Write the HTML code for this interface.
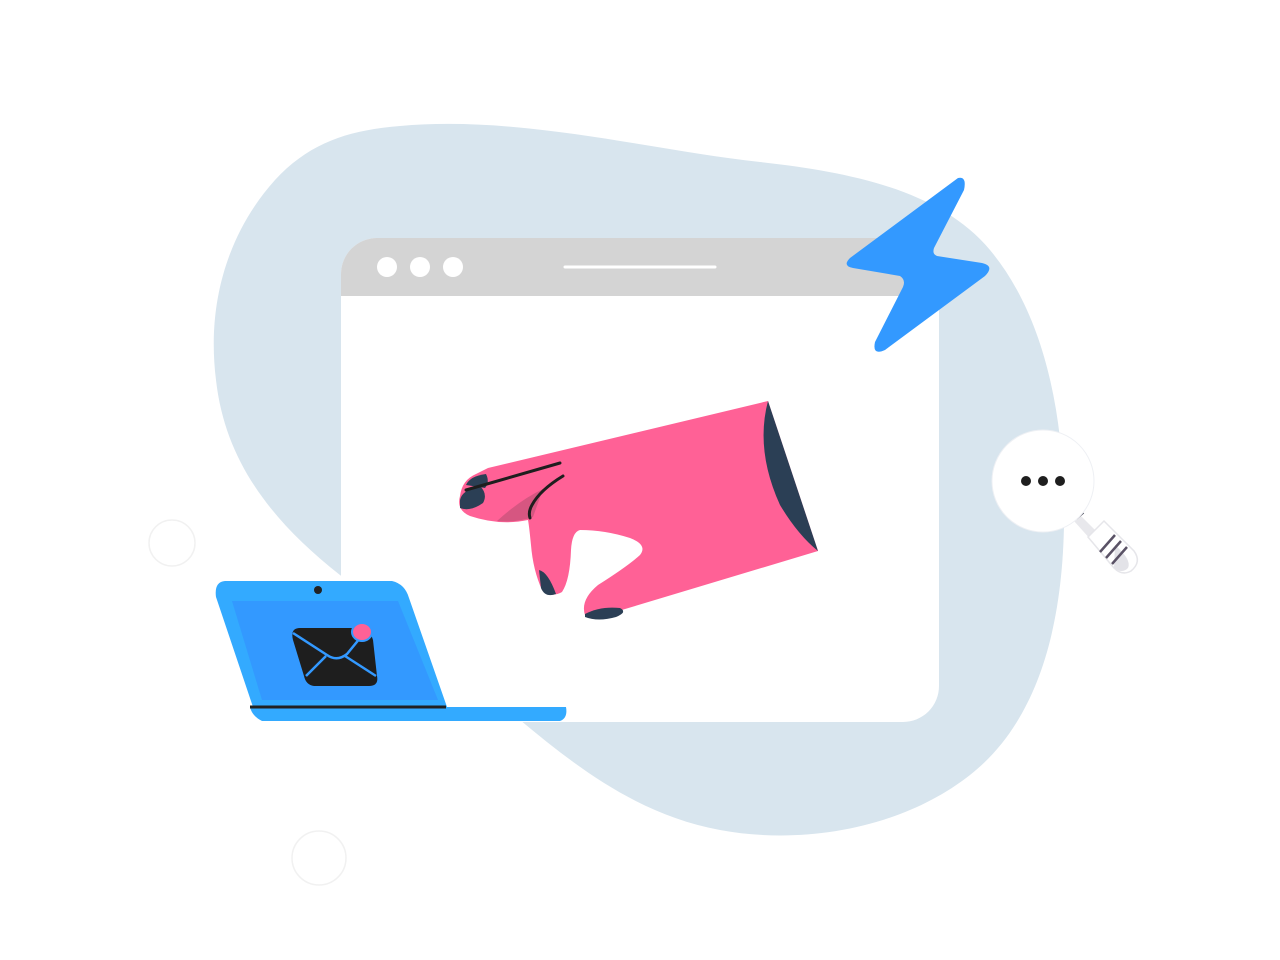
<!DOCTYPE html>
<html><head><style>html,body{margin:0;padding:0;background:#fff;width:1280px;height:960px;overflow:hidden}</style></head>
<body>
<svg width="1280" height="960" viewBox="0 0 1280 960" xmlns="http://www.w3.org/2000/svg">
<path d="M400,126 C520,115 650,150 760,162 C850,172 940,190 990,250 C1040,310 1062,400 1064,500 C1066,620 1040,720 970,775 C900,830 800,845 720,830 C640,815 580,770 520,720 L340,575 C270,520 225,460 216,380 C206,300 230,230 275,180 C310,142 350,130 400,126 Z" fill="#d8e5ee"/>
<circle cx="172" cy="543" r="23" fill="#fff" stroke="#f1f1f1" stroke-width="1.5"/>
<circle cx="319" cy="858" r="27" fill="#fff" stroke="#f1f1f1" stroke-width="1.5"/>
<rect x="341" y="238" width="598" height="484" rx="36" fill="#fff"/>
<path d="M377,238 H903 A36,36 0 0 1 939,274 V296 H341 V274 A36,36 0 0 1 377,238 Z" fill="#d4d4d4"/>
<circle cx="387" cy="267" r="10" fill="#fff"/><circle cx="420" cy="267" r="10" fill="#fff"/><circle cx="453" cy="267" r="10" fill="#fff"/>
<line x1="565" y1="267" x2="715" y2="267" stroke="#fff" stroke-width="3" stroke-linecap="round"/>
<path d="M958,178 L850,258 Q842,266 853,268 L900,276 Q906,280 903,287 L875,342 Q872,356 885,350 L985,276 Q995,266 982,263 L937,256 Q932,254 934,248 L964,190 Q967,176 958,178 Z" fill="#3399ff"/>
<path d="M488,468 L768,401 L818,551 L615,612 Q595,620 585,615 Q580,600 598,585 Q628,566 640,555 Q648,545 630,538 Q605,530 580,530 Q572,532 571,550 Q570,580 562,592 Q552,598 542,590 Q533,570 531,545 Q529,525 528,520 Q500,526 470,516 Q456,510 460,496 Q462,480 476,474 Z" fill="#ff6196"/>
<path d="M768,401 Q755,450 780,505 Q798,535 818,551 Z" fill="#2b3f55"/>
<path d="M460,500 Q462,490 480,486 Q488,494 483,503 Q470,512 460,508 Z" fill="#2b3f55"/>
<path d="M466,485 Q470,476 486,474 Q490,482 485,488 Z" fill="#2b3f55"/>
<path d="M539,570 Q548,572 556,594 Q545,598 541,588 Z" fill="#2b3f55"/>
<path d="M585,614 Q600,606 620,608 Q628,612 616,617 Q598,622 585,617 Z" fill="#2b3f55"/>
<path d="M497,521 Q520,500 543,489 L533,517 Q515,523 497,521 Z" fill="#d65681"/>
<path d="M466,490 L560,463" stroke="#1e1e1e" stroke-width="3" stroke-linecap="round"/>
<path d="M563,476 Q540,490 532,505 Q528,512 530,518" stroke="#1e1e1e" stroke-width="3" fill="none" stroke-linecap="round"/>
<path d="M225,581 L392,581 Q405,584 409,598 L447,707 L253,707 L216,597 Q214,582 225,581 Z" fill="#33aaff"/>
<path d="M232,601 L398,601 L438,700 L262,700 Z" fill="#3399ff"/>
<circle cx="318" cy="590" r="4" fill="#222"/>
<path d="M250,707 L566,707 Q568,718 560,721 L262,721 Q252,716 250,707 Z" fill="#33aaff"/>
<line x1="250" y1="707" x2="446" y2="707" stroke="#222" stroke-width="3"/>
<path d="M300,628 L362,628 Q370,630 373,640 L377,676 Q379,686 369,686 L314,686 Q306,685 304,676 L293,640 Q290,628 300,628 Z" fill="#1e1e1e"/>
<path d="M293,633 L327,655 Q337,662 347,654 L365,632 M306,676 L326,656 M345,656 L376,676" stroke="#3399ff" stroke-width="2.5" fill="none"/>
<ellipse cx="362" cy="632" rx="10" ry="9" fill="#ff6196" stroke="#3399ff" stroke-width="2"/>
<path d="M1079,514 L1099,534 L1092,541 L1074,521 Z" fill="#e8e8ec"/>
<path d="M1088,537 L1104,521 L1134,551 Q1142,562 1131,571 Q1122,576 1114,568 Z" fill="#fff" stroke="#e6e6ea" stroke-width="1.5"/>
<path d="M1115,545 Q1132,560 1128,568 Q1122,574 1114,568 Z" fill="#e3e3e8"/>
<path d="M1076,518 L1083,512" stroke="#4a4a5a" stroke-width="3.5"/>
<path d="M1115,535 L1100,552 M1121,541 L1106,558 M1127,547 L1112,564" stroke="#5a5266" stroke-width="2.5"/>
<circle cx="1043" cy="481" r="51" fill="#fff" stroke="#eef0f4" stroke-width="1"/>
<circle cx="1026" cy="481" r="5" fill="#1e1e1e"/><circle cx="1043" cy="481" r="5" fill="#1e1e1e"/><circle cx="1060" cy="481" r="5" fill="#1e1e1e"/>
</svg>
</body></html>
